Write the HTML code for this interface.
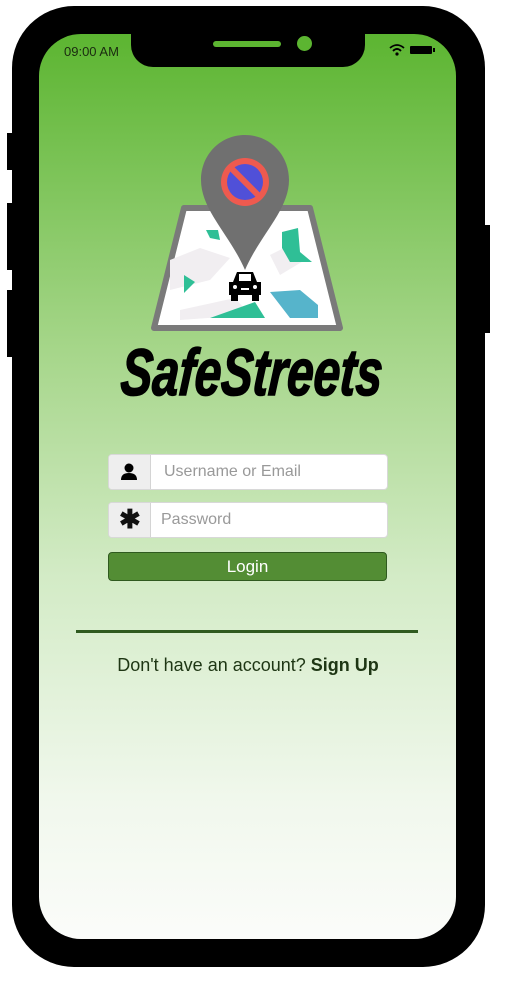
<!DOCTYPE html>
<html><head><style>
html,body{margin:0;padding:0;width:506px;height:985px;background:#fff;overflow:hidden;font-family:"Liberation Sans",Arial,sans-serif;}
.abs{position:absolute}
.phone{left:12px;top:6px;width:473px;height:961px;background:#000;border-radius:62px}
.screen{left:39px;top:34px;width:417px;height:905px;border-radius:42px;background:linear-gradient(#5cb531 0%,#a6d68a 35%,#d3ebc6 60%,#f1f8ed 85%,#fbfcfa 100%);overflow:hidden}
.notch{left:92px;top:-2px;width:234px;height:35px;background:#000;border-radius:0 0 22px 22px}
.btn{background:#000}
.inp{left:108px;width:278px;height:34px;border:1px solid #d8d8d8;border-radius:4px;background:#fff;overflow:hidden}
.ico{position:absolute;left:0;top:0;width:41px;height:34px;background:#eee;border-right:1px solid #d4d4d4}
.ph{position:absolute;left:55px;top:8px;font-size:16px;color:#999}
</style></head><body>
<div class="abs btn" style="left:7px;top:133px;width:6px;height:37px"></div>
<div class="abs btn" style="left:7px;top:203px;width:6px;height:67px"></div>
<div class="abs btn" style="left:7px;top:290px;width:6px;height:67px"></div>
<div class="abs btn" style="left:484px;top:225px;width:6px;height:108px"></div>
<div class="abs phone"></div>
<div class="abs screen">
  <div class="abs notch"></div>
  <div class="abs" style="left:174px;top:7px;width:68px;height:6px;border-radius:3px;background:#5cb531"></div>
  <div class="abs" style="left:258px;top:2px;width:15px;height:15px;border-radius:50%;background:#5cb531"></div>
  <div class="abs" style="left:25px;top:10px;font-size:13px;color:#1a2a10">09:00 AM</div>
  <svg class="abs" style="left:350px;top:10px" width="16" height="12" viewBox="0 0 16 12"><path d="M1 4 Q8 -2 15 4" stroke="#000" stroke-width="1.8" fill="none"/><path d="M4 7 Q8 3 12 7" stroke="#000" stroke-width="1.8" fill="none"/><circle cx="8" cy="10" r="1.6"/></svg>
  <div class="abs" style="left:371px;top:12px;width:22px;height:8px;background:#000;border-radius:1px"></div>
  <div class="abs" style="left:394px;top:14px;width:2px;height:4px;background:#000"></div>
</div>
<svg class="abs" style="left:140px;top:130px" width="220" height="210" viewBox="0 0 220 210">
  <path d="M44 78 H170 L200 198 H14 Z" fill="#fff" stroke="#7a7a7a" stroke-width="6" stroke-linejoin="round"/>
  <path d="M30 130 L60 118 L90 128 L70 150 L30 160 Z" fill="#f1eef1"/>
  <path d="M40 180 L95 168 L110 185 L40 190 Z" fill="#f1eef1"/>
  <path d="M130 125 L150 115 L165 130 L140 145 Z" fill="#f1eef1"/>
  <path d="M66 100 L78 100 L80 110 L70 108 Z" fill="#2fbf96"/>
  <path d="M142 102 L158 98 L160 122 L172 132 L150 132 L142 118Z" fill="#2fbf96"/>
  <path d="M44 145 L55 152 L44 163 Z" fill="#2fbf96"/>
  <path d="M70 188 L115 172 L125 188 Z" fill="#2fbf96"/>
  <path d="M130 162 L160 160 L178 175 L178 188 L150 188 Z" fill="#56b4cb"/>
  <path d="M105 5 C80 5 61 25 61 50 C61 80 90 105 105 140 C120 105 149 80 149 50 C149 25 130 5 105 5 Z" fill="#707070"/>
  <circle cx="105" cy="52" r="24" fill="#ee5a4f"/>
  <circle cx="105" cy="52" r="18" fill="#5050d8"/>
  <line x1="92" y1="39" x2="118" y2="65" stroke="#ee5a4f" stroke-width="6"/>
  <path d="M93 152 L97 142 H113 L117 152 H121 V165 H89 V152 Z" fill="#000"/>
  <rect x="91" y="164" width="7" height="7" fill="#000"/><rect x="112" y="164" width="7" height="7" fill="#000"/>
  <rect x="99" y="144" width="12" height="7" fill="#fff"/>
  <circle cx="95" cy="157" r="2" fill="#fff"/><circle cx="115" cy="157" r="2" fill="#fff"/>
  <rect x="101" y="158" width="8" height="2" fill="#fff"/>
</svg>
<div class="abs" style="left:252px;top:334px;transform:translateX(-50%) scaleX(0.72) skewX(-6deg);font-size:66px;font-weight:bold;font-style:italic;white-space:nowrap;color:#000;-webkit-text-stroke:1.5px #000">SafeStreets</div>
<div class="abs inp" style="top:454px"><div class="ico"><svg width="41" height="34"><circle cx="20" cy="13" r="4.5"/><path d="M12 25 Q12 18 20 18 Q28 18 28 25 Z"/></svg></div><div class="ph">Username or Email</div></div>
<div class="abs inp" style="top:502px"><div class="ico"><div style="position:absolute;left:10px;top:1px;font-size:26px;font-weight:bold;color:#111">✱</div></div><div class="ph" style="left:52px">Password</div></div>
<div class="abs" style="left:108px;top:552px;width:277px;height:27px;background:#538d34;border:1px solid #2f5a1f;border-radius:4px;color:#fff;font-size:17px;text-align:center;line-height:27px">Login</div>
<div class="abs" style="left:76px;top:630px;width:342px;height:3px;background:#2f5a1f"></div>
<div class="abs" style="left:0;top:655px;width:496px;text-align:center;font-size:18px;color:#1e3614">Don't have an account? <b>Sign Up</b></div>
</body></html>
